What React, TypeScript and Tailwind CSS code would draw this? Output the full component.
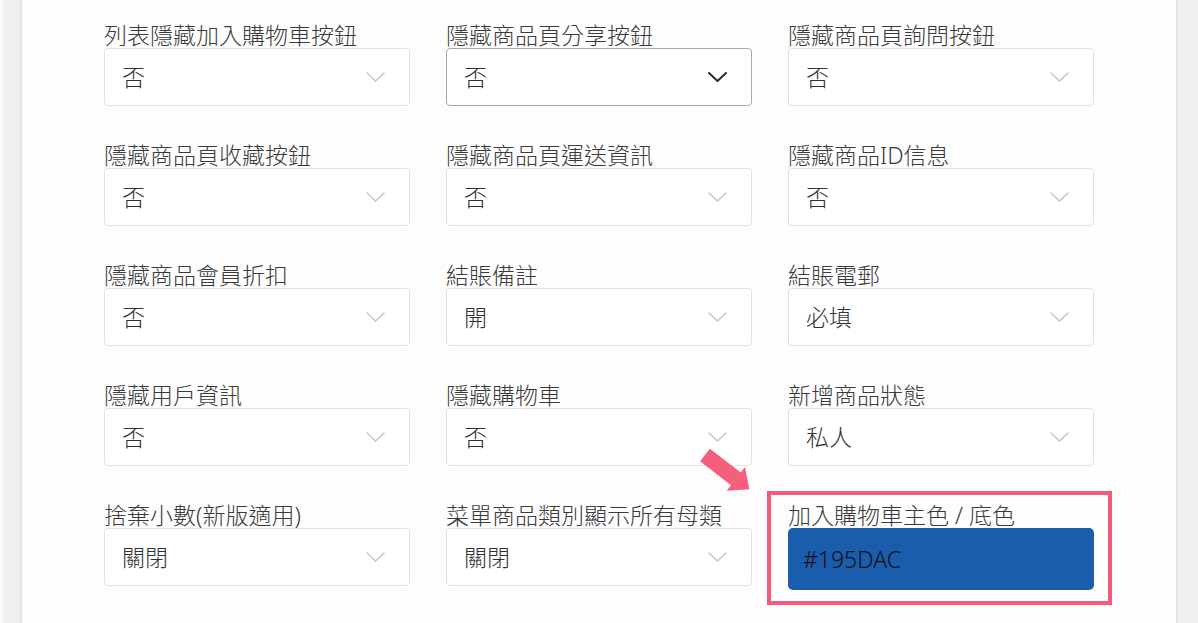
import { ReactNode } from 'react'

type Field = { label: string; value: string; focused?: boolean }

const FIELDS: Field[] = [
  { label: '列表隱藏加入購物車按鈕', value: '否' },
  { label: '隱藏商品頁分享按鈕', value: '否', focused: true },
  { label: '隱藏商品頁詢問按鈕', value: '否' },
  { label: '隱藏商品頁收藏按鈕', value: '否' },
  { label: '隱藏商品頁運送資訊', value: '否' },
  { label: '隱藏商品ID信息', value: '否' },
  { label: '隱藏商品會員折扣', value: '否' },
  { label: '結賬備註', value: '開' },
  { label: '結賬電郵', value: '必填' },
  { label: '隱藏用戶資訊', value: '否' },
  { label: '隱藏購物車', value: '否' },
  { label: '新增商品狀態', value: '私人' },
  { label: '捨棄小數(新版適用)', value: '關閉' },
  { label: '菜單商品類別顯示所有母類', value: '關閉' },
]

function Chevron({ dark }: { dark?: boolean }) {
  return (
    <svg width="19" height="10" viewBox="0 0 19 10" fill="none" className="shrink-0">
      <path
        d="M1 1l8.5 8L18 1"
        stroke={dark ? '#2b2b2b' : '#c4c4c4'}
        strokeWidth={dark ? 2 : 1.4}
        strokeLinecap="round"
        strokeLinejoin="round"
      />
    </svg>
  )
}

function Label({ children }: { children: ReactNode }) {
  return (
    <div className="h-[26px] text-[23px] leading-[26px] font-light whitespace-nowrap text-[#3a3a3a]">
      {children}
    </div>
  )
}

function SelectField({ label, value, focused }: Field) {
  return (
    <div>
      <Label>{label}</Label>
      <div
        className={
          focused
            ? 'flex h-[58px] items-center justify-between rounded-[4px] border border-[#a8a8a8] bg-white pr-[24px] pl-[17px]'
            : 'flex h-[58px] items-center justify-between rounded-[4px] border border-[#e0e0e0] bg-white pr-[24px] pl-[17px]'
        }
      >
        <span className="text-[23px] font-light text-[#333]">{value}</span>
        <Chevron dark={focused} />
      </div>
    </div>
  )
}

/* annotated cell: pink frame + arrow are screenshot markup drawn over the field */
function ColorField() {
  return (
    <div className="relative">
      <Label>加入購物車主色 / 底色</Label>
      <div className="flex h-[62px] items-center rounded-[5px] bg-[#195DAC] pl-[15px] text-[23px] font-light text-[#111]">
        #195DAC
      </div>
      <div className="pointer-events-none absolute -top-[11px] -right-[18px] -bottom-[15px] -left-[21px] border-[4px] border-[#f25c7a]" />
      <svg
        width="70"
        height="60"
        viewBox="0 0 70 60"
        className="pointer-events-none absolute -top-[62px] -left-[95px]"
      >
        <polygon
          points="0,-8 39,-8 39,-15 56,0 39,15 39,8 0,8"
          fill="#f4607c"
          transform="translate(12 15) rotate(37.7)"
        />
      </svg>
    </div>
  )
}

export default function App() {
  return (
    <div className="flex h-[623px] w-[1198px] overflow-hidden bg-[#f0f0f0] font-['Noto_Sans','Noto_Sans_CJK_TC',sans-serif]">
      <div className="w-[3px] bg-[#fafafa]" />
      <div className="w-[19px] border-r-2 border-[#e6e6e6] bg-[#efefef]" />

      <main className="w-[1154px] bg-[#fdfdfd] px-[82px] pt-[22px]">
        <div className="grid grid-cols-3 gap-x-[36px] gap-y-[36px]">
          {FIELDS.map((f) => (
            <SelectField key={f.label} {...f} />
          ))}
          <ColorField />
        </div>
      </main>

      <div className="flex-1 border-l-2 border-[#e4e4e4] bg-[#f0f0f0]" />
    </div>
  )
}
